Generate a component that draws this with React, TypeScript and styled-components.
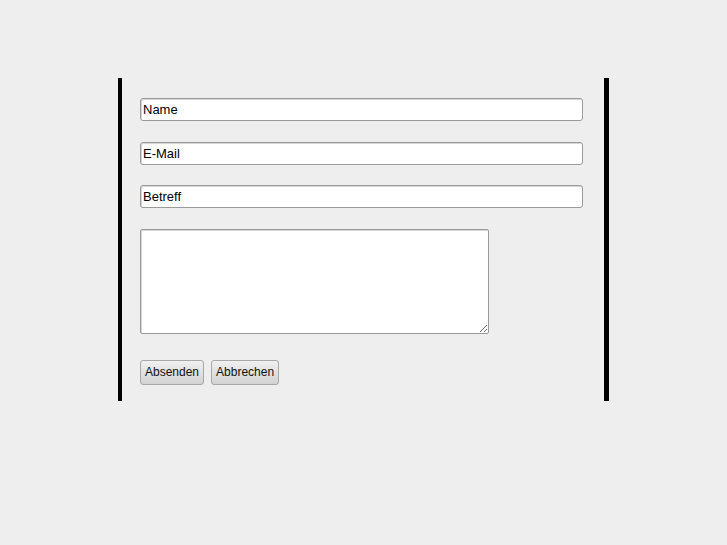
import styled, { createGlobalStyle } from 'styled-components';

const GlobalStyle = createGlobalStyle`
  html, body {
    margin: 0;
    padding: 0;
    background: #eeeeee;
    font-family: "Liberation Sans", Arial, sans-serif;
  }
`;

const Page = styled.div`
  padding-top: 78px;
`;

const Frame = styled.form`
  box-sizing: border-box;
  width: 491px;
  margin: 0 auto;
  border-left: 4px solid #000;
  border-right: 5px solid #000;
  padding: 20px 21px 16px 18px;
  display: flex;
  flex-direction: column;
  align-items: flex-start;
`;

const Field = styled.input`
  box-sizing: border-box;
  width: 100%;
  height: 23px;
  margin: 0 0 20.5px 0;
  padding: 0 2px;
  background: #fff;
  border: 1px solid #9a9a9a;
  border-radius: 3px;
  box-shadow: inset 1px 1px 0 #d6d6d6;
  font-family: "Liberation Sans", Arial, sans-serif;
  font-size: 13px;
  color: #000;
  outline: none;
`;

const Message = styled.textarea`
  box-sizing: border-box;
  width: 349px;
  height: 105px;
  margin: 0 0 26px 0;
  background: #fff;
  border: 1px solid #9a9a9a;
  border-radius: 2px;
  box-shadow: inset 1px 1px 0 #d6d6d6;
  font-family: "Liberation Sans", Arial, sans-serif;
  font-size: 13px;
  outline: none;
`;

const Actions = styled.div`
  display: flex;
  gap: 7px;
`;

const Button = styled.button`
  box-sizing: border-box;
  height: 25px;
  padding: 0 4px;
  border: 1px solid #a8a8a8;
  border-radius: 3px;
  background: linear-gradient(#f0f0f0, #d2d2d2);
  font-family: "Liberation Sans", Arial, sans-serif;
  font-size: 12px;
  color: #111;
  cursor: pointer;
`;

export default function App() {
  return (
    <>
      <GlobalStyle />
      <Page>
        <Frame onSubmit={(e) => e.preventDefault()}>
          <Field type="text" defaultValue="Name" />
          <Field type="text" defaultValue="E-Mail" />
          <Field type="text" defaultValue="Betreff" />
          <Message />
          <Actions>
            <Button type="submit">Absenden</Button>
            <Button type="reset">Abbrechen</Button>
          </Actions>
        </Frame>
      </Page>
    </>
  );
}
